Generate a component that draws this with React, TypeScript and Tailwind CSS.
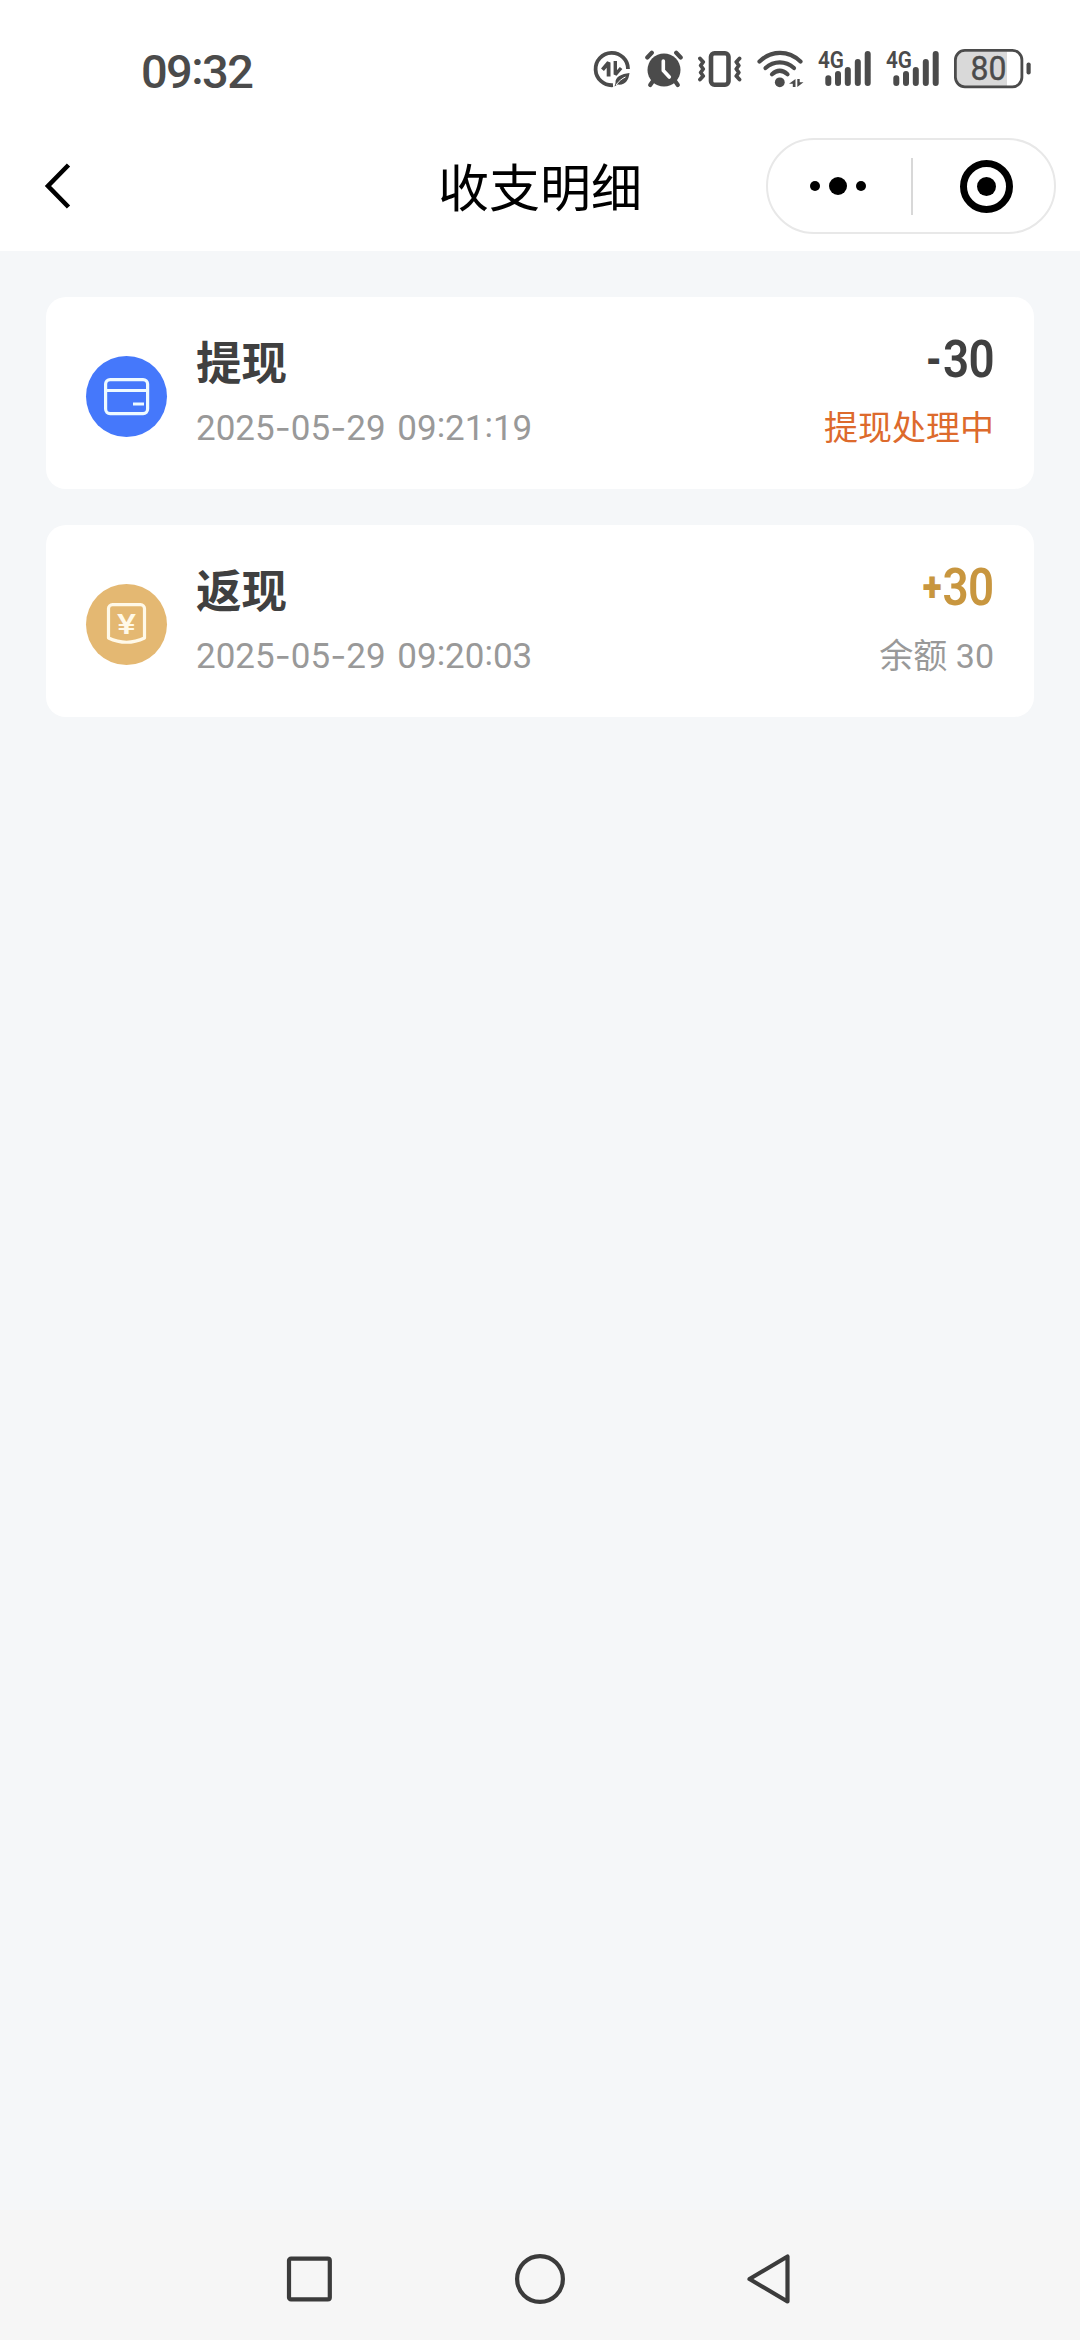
import React from "react";

interface RecordItem {
  id: number;
  type: "withdraw" | "cashback";
  title: string;
  time: string;
  sign: string;
  amount: number;
  remark: string;
}

const records: RecordItem[] = [
  { id: 1, type: "withdraw", title: "提现", time: "2025-05-29 09:21:19", sign: "-", amount: 30, remark: "提现处理中" },
  { id: 2, type: "cashback", title: "返现", time: "2025-05-29 09:20:03", sign: "+", amount: 30, remark: "余额 30" },
];

function DataSaverIcon() {
  return (
    <svg width="38" height="40" viewBox="0 0 38 40" fill="none" stroke="#4b4b4b">
      <path d="M35 20A16.200 16.200 0 1 0 20 36.200" strokeWidth="3.800" />
      <path d="M15.600 27.500V13.600L9.500 20.800" strokeWidth="3.800" strokeLinejoin="bevel" />
      <path d="M22.300 12v13.600l5.800-6.600" strokeWidth="3.400" strokeLinejoin="bevel" />
      <path d="M36.500 24c-8 1-14.500 3.600-14 10l-1 3.500 3-2c7.500 1 11-3.500 12-11.500z" fill="#4b4b4b" stroke="none" />
      <path d="M23 36c3-4 6-6.500 9.500-8" stroke="#fff" strokeWidth="1" />
    </svg>
  );
}

function AlarmIcon() {
  return (
    <svg width="38" height="40" viewBox="0 0 38 40" fill="none" stroke="#4b4b4b" strokeLinecap="round">
      <circle cx="19" cy="21" r="16.500" fill="#4b4b4b" stroke="none" />
      <path d="M2.300 8.500l4.500-4.700M35.700 8.500l-4.500-4.700" strokeWidth="4.200" />
      <path d="M8 32l-2.800 4M30 32l2.800 4" strokeWidth="4.200" />
      <path d="M18.300 12v9.500l6 6.500" stroke="#fff" strokeWidth="3.600" strokeLinejoin="round" />
    </svg>
  );
}

function VibrateIcon() {
  return (
    <svg width="44" height="40" viewBox="0 0 44 40" fill="none" stroke="#4b4b4b">
      <rect x="13" y="4.300" width="17.500" height="31.400" rx="3.500" strokeWidth="4.600" />
      <path d="M2 9.500l3.200 3.500-2.500 3.500 2.500 3.500-2.500 3.500 2.500 3.500L2 30.500" strokeWidth="3.800" strokeLinejoin="round" strokeLinecap="round" />
      <path d="M41.500 9.500l-3.200 3.500 2.500 3.500-2.500 3.500 2.500 3.500-2.500 3.500 3.200 3.500" strokeWidth="3.800" strokeLinejoin="round" strokeLinecap="round" />
    </svg>
  );
}

function WifiIcon() {
  return (
    <svg width="47" height="40" viewBox="0 0 47 40" fill="none" stroke="#4b4b4b" strokeLinecap="round" strokeWidth="4.200">
      <path d="M2.500 12.500c12-11.500 29-11.500 41 0" />
      <path d="M8.500 19c8.500-7.500 20-7.500 28.500 0" />
      <path d="M15 25.300c5-4.500 10.500-4.500 15.500 0" />
      <circle cx="22.800" cy="33.300" r="4.900" fill="#4b4b4b" stroke="none" />
      <path d="M38.500 30v8h-2.700v-3.200H32zM40.300 38v-8h2.400v3.200H46.500z" fill="#4b4b4b" stroke="none" />
    </svg>
  );
}

function SignalIcon() {
  return (
    <svg width="54" height="46" viewBox="0 -6 54 46" className="-mt-[6px] overflow-visible">
      <text x="0" y="18.500" fontSize="23" fontWeight="600" fill="#4b4b4b" fontFamily="Roboto, sans-serif" textLength="26" lengthAdjust="spacingAndGlyphs">
        4G
      </text>
      <path d="M10.300 29.300v4.700M20 25v9M29.800 21v13M39.800 13v21M49.700 5v29" stroke="#4b4b4b" strokeWidth="6" strokeLinecap="round" />
    </svg>
  );
}

function BatteryIcon() {
  return (
    <svg width="78" height="40" viewBox="0 0 78 40">
      <path d="M11 2.500h42v35H11A8.500 8.500 0 0 1 2.500 29V11A8.500 8.500 0 0 1 11 2.500z" fill="#d9d9d9" />
      <rect x="1.400" y="1.400" width="66.500" height="36.400" rx="9.500" fill="none" stroke="#4b4b4b" strokeWidth="2.800" />
      <rect x="72.500" y="13.500" width="4.200" height="12" rx="2" fill="#4b4b4b" />
      <text x="34.500" y="31" textAnchor="middle" fontSize="33" fill="#4b4b4b" stroke="#4b4b4b" strokeWidth="0.400" fontFamily="Roboto, sans-serif" textLength="36" lengthAdjust="spacingAndGlyphs">
        80
      </text>
    </svg>
  );
}

function StatusBar() {
  return (
    <div className="flex h-[120px] items-start justify-between pt-[49px] pr-[48px] pl-[141px] text-[#4b4b4b]">
      <span className="-mt-[5px] text-[47px] leading-[43px] font-medium tracking-[-1.6px]">
        09<span className="align-[4px] leading-none">:</span>32
      </span>
      <div className="flex">
        <DataSaverIcon />
        <div className="ml-[14px]"><AlarmIcon /></div>
        <div className="ml-[15px]"><VibrateIcon /></div>
        <div className="ml-[15px]"><WifiIcon /></div>
        <div className="ml-[14px]"><SignalIcon /></div>
        <div className="ml-[14px]"><SignalIcon /></div>
        <div className="ml-[14px]"><BatteryIcon /></div>
      </div>
    </div>
  );
}

function NavHeader() {
  return (
    <div className="grid h-[131px] grid-cols-[1fr_auto_1fr] items-start px-[24px] pt-[18px]">
      <button className="flex h-24 items-center pl-[16px]">
        <svg width="34" height="48" viewBox="0 0 34 48" fill="none" stroke="#000" strokeWidth="4.600">
          <path d="M28.500 3L8 24l20.500 21" />
        </svg>
      </button>
      <h1 className="pt-[4px] text-[51px] leading-24 font-normal text-black">收支明细</h1>
      <div className="flex h-24 w-[290px] items-center justify-self-end rounded-full border-2 border-[#e8e8e8]">
        <div className="flex w-[143px] items-center justify-center gap-[9px] pr-[3px]">
          <span className="size-[10px] rounded-full bg-black" />
          <span className="size-[18px] rounded-full bg-black" />
          <span className="size-[10px] rounded-full bg-black" />
        </div>
        <div className="h-[57px] w-[2px] bg-[#d8d8d8]" />
        <div className="flex flex-1 justify-center pl-[6px]">
          <div className="flex size-[53px] items-center justify-center rounded-full border-[7px] border-black">
            <span className="size-[19px] rounded-full bg-black" />
          </div>
        </div>
      </div>
    </div>
  );
}

function CardIcon() {
  return (
    <svg width="81" height="81" viewBox="0 0 81 81" fill="none" stroke="#eefaff" strokeWidth="3.200">
      <rect x="19.600" y="23.600" width="42" height="34" rx="4.500" />
      <path d="M19.600 34.500h42M47 48h11" strokeWidth="2.800" />
    </svg>
  );
}

function YuanIcon() {
  return (
    <svg width="81" height="81" viewBox="0 0 81 81" fill="none" stroke="#fff9e8" strokeWidth="3.200">
      <path d="M22.500 54V24.600a4 4 0 0 1 4-4h28a4 4 0 0 1 4 4V54Q40.500 62.500 22.500 54z" strokeLinejoin="round" />
      <text x="40.500" y="49.500" textAnchor="middle" fontSize="27" fontWeight="500" fill="#fff9e8" stroke="none" fontFamily="Roboto, sans-serif" textLength="19" lengthAdjust="spacingAndGlyphs">
        ¥
      </text>
    </svg>
  );
}

function RecordTime({ value }: { value: string }) {
  return (
    <p className="mt-[13px] text-[35px] leading-[42px] whitespace-pre text-[#999]">
      {value.split("").map((ch, idx) => {
        if (ch === "-") return <span key={idx} className="font-['Inter'] leading-none">-</span>;
        if (ch === ":") return <span key={idx} className="align-[3px] leading-none">:</span>;
        if (ch === " ") return <span key={idx} className="tracking-[3px]"> </span>;
        return ch;
      })}
    </p>
  );
}

function RecordCard({ item }: { item: RecordItem }) {
  const isWithdraw = item.type === "withdraw";
  return (
    <div className="flex h-[192px] items-start rounded-[20px] bg-white px-[40px]">
      <div className={isWithdraw ? "mt-[59px] rounded-full bg-[#4578fb]" : "mt-[59px] rounded-full bg-[#e4b872]"}>
        {isWithdraw ? <CardIcon /> : <YuanIcon />}
      </div>
      <div className="mt-[38px] ml-[29px]">
        <h2 className="text-[45.5px] leading-[60px] font-bold text-[#404040]">{item.title}</h2>
        <RecordTime value={item.time} />
      </div>
      <div className="mt-[33px] ml-auto flex flex-col items-end">
        <div className={`flex origin-right scale-x-[0.88] items-center text-[52px] leading-[60px] font-semibold ${isWithdraw ? "text-[#404040]" : "text-[#c8963f]"}`}>
          <span className={isWithdraw ? "mr-[1px] text-[42px] font-black" : "mr-[1px] text-[40px] font-black"}>{item.sign}</span>
          <span className="tracking-[-0.5px]">{item.amount}</span>
        </div>
        <span className={`mt-[17px] text-[34px] leading-[42px] ${isWithdraw ? "text-[#dd6a2c]" : "text-[#999]"}`}>
          {item.remark}
        </span>
      </div>
    </div>
  );
}

function SystemNav() {
  return (
    <div className="flex h-[130px] items-center justify-center gap-[178px] bg-[#f6f6f6] pt-[8px]">
      <svg width="50" height="52" viewBox="0 0 50 52" fill="none" stroke="#3b3b3b" strokeWidth="4.200">
        <rect x="3" y="5.600" width="40.800" height="40.800" rx="2" />
      </svg>
      <svg width="52" height="52" viewBox="0 0 52 52" fill="none" stroke="#3b3b3b" strokeWidth="4.200">
        <circle cx="26" cy="26" r="22.900" />
      </svg>
      <svg width="50" height="52" viewBox="0 0 50 52" fill="none" stroke="#3b3b3b" strokeWidth="4.200" strokeLinejoin="round">
        <path d="M43.500 3.500v45L5.500 26z" />
      </svg>
    </div>
  );
}

export default function App() {
  return (
    <div className="flex h-[2340px] w-[1080px] flex-col bg-[#f5f7f9] font-['Roboto','Noto_Sans_CJK_SC',sans-serif]">
      <div className="bg-white">
        <StatusBar />
        <NavHeader />
      </div>
      <main className="flex flex-1 flex-col gap-[36px] px-[46px] pt-[46px]">
        {records.map((item) => (
          <RecordCard key={item.id} item={item} />
        ))}
      </main>
      <SystemNav />
    </div>
  );
}
